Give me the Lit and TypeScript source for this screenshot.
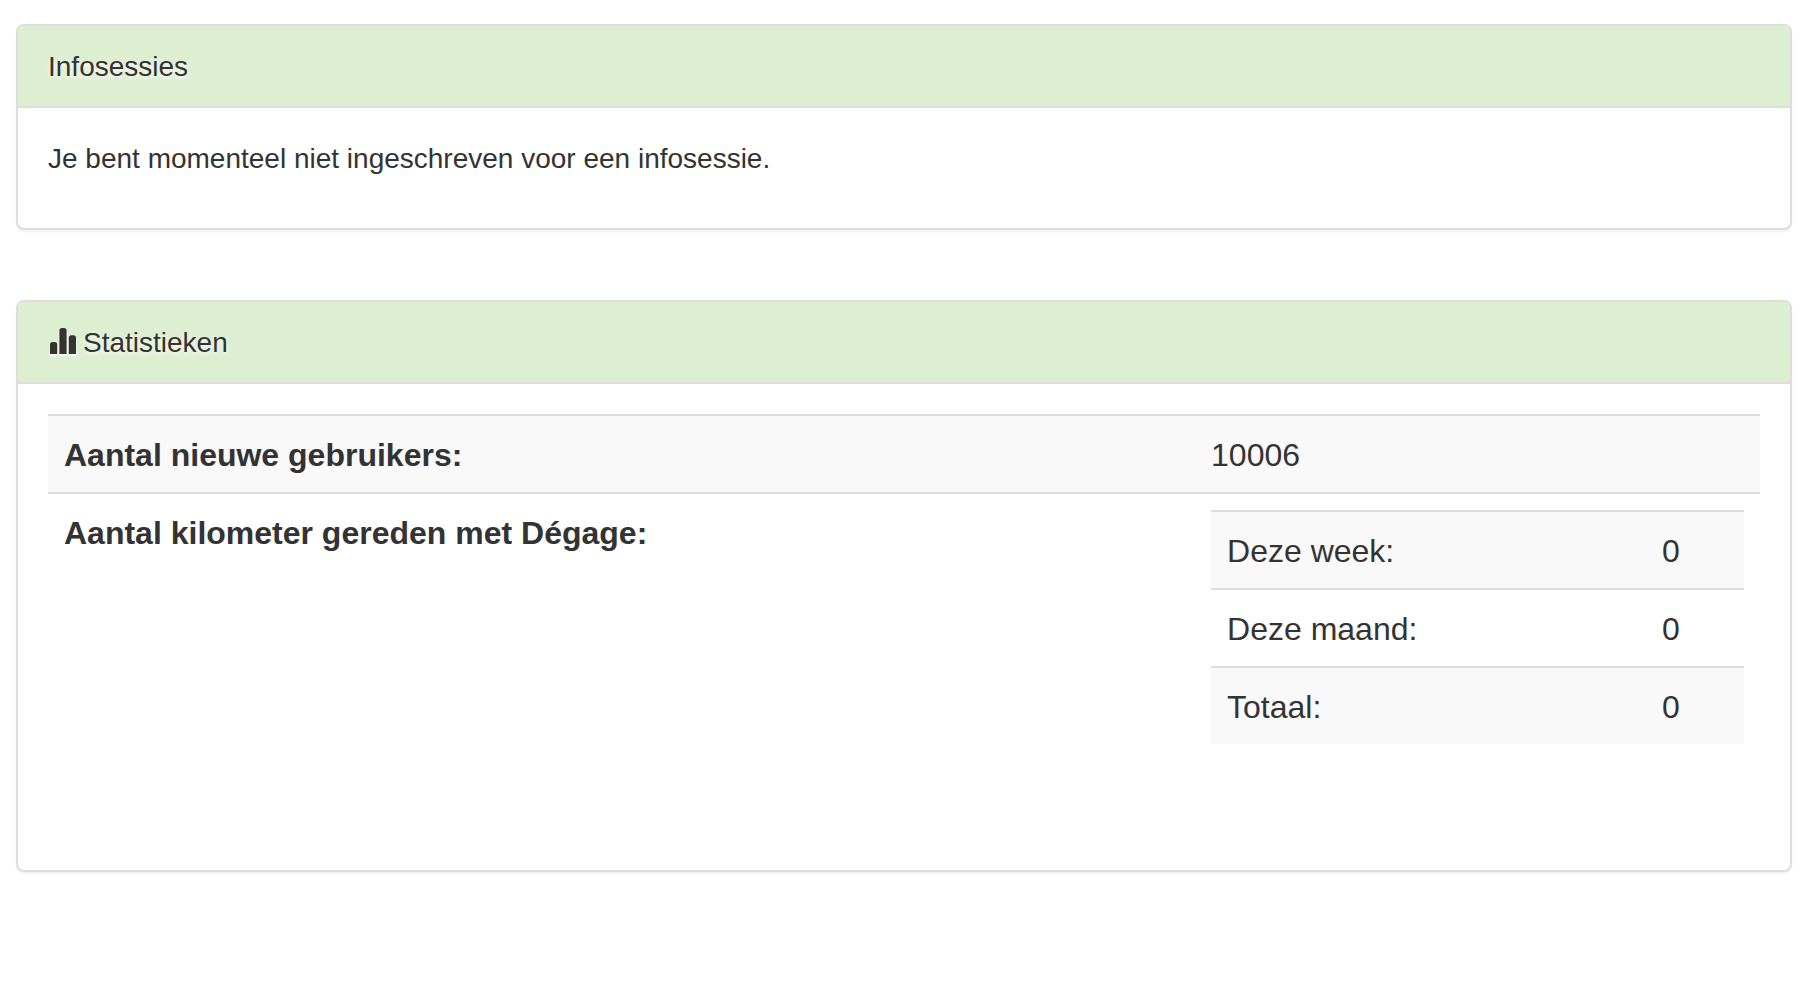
import { LitElement, html, css, nothing } from "lit";
import { customElement, property } from "lit/decorators.js";

interface DistanceRow {
  label: string;
  value: number;
}

const NEW_USERS = 10006;

const DISTANCES: DistanceRow[] = [
  { label: "Deze week:", value: 0 },
  { label: "Deze maand:", value: 0 },
  { label: "Totaal:", value: 0 },
];

@customElement("info-panel")
export class InfoPanel extends LitElement {
  @property() heading = "";
  @property({ type: Boolean }) chart = false;

  static styles = css`
    :host {
      display: block;
    }
    .panel {
      border: 2px solid #ddd;
      border-radius: 8px;
      background: #fff;
      box-shadow: 0 2px 2px rgba(0, 0, 0, 0.05);
    }
    .title {
      display: flex;
      align-items: center;
      gap: 7px;
      margin: 0;
      padding: 21px 30px 19px;
      border-bottom: 2px solid #ddd;
      border-radius: 6px 6px 0 0;
      background: #deeed1;
      font-size: 28px;
      font-weight: 400;
      line-height: 40px;
      text-shadow: 0 2px 4px #fff;
    }
    .icon {
      width: 28px;
      height: 30px;
      flex: none;
      fill: currentColor;
      filter: drop-shadow(0 2px 1px #fff);
    }
    .body {
      padding: 30px;
    }
  `;

  render() {
    return html`
      <section class="panel">
        <h2 class="title">
          ${this.chart
            ? html`<svg class="icon" viewBox="0 0 28 30" aria-hidden="true">
                <path d="M2 26V16.500q0-2.500 2.500-2.500h2.200q2.500 0 2.500 2.500v9.500z" />
                <path d="M11.400 26V2.600q0-2.500 2.500-2.500h2.200q2.500 0 2.500 2.500v23.400z" />
                <path d="M20.800 26V9.700q0-2.500 2.500-2.500h2.200q2.500 0 2.500 2.500v16.300z" />
              </svg>`
            : nothing}
          <span>${this.heading}</span>
        </h2>
        <div class="body"><slot></slot></div>
      </section>
    `;
  }
}

@customElement("app-root")
export class AppRoot extends LitElement {
  static styles = css`
    :host {
      display: block;
      color: #333;
      font-family: "Liberation Sans", Arial, sans-serif;
      font-size: 28px;
      line-height: 40px;
    }
    .page {
      display: flex;
      flex-direction: column;
      gap: 70px;
      padding: 24px 26px 24px 16px;
    }
    .message {
      margin: 0;
      padding: 1px 0 19px;
    }
    .table {
      width: 100%;
      margin-bottom: 40px;
      border-collapse: separate;
      border-spacing: 0;
      table-layout: fixed;
      font-size: 32px;
      line-height: 44px;
    }
    .table th,
    .table td {
      padding: 17px 16px 15px;
      border-top: 2px solid #ddd;
      text-align: left;
      vertical-align: top;
    }
    .table .nested {
      padding: 16px;
    }
    .striped {
      background: #f9f9f9;
    }
    .label {
      width: 67%;
      box-sizing: border-box;
    }
    .table .period {
      font-weight: 400;
    }
    .distance {
      width: 98px;
      box-sizing: border-box;
    }
  `;

  render() {
    return html`
      <main class="page">
        <info-panel heading="Infosessies">
          <p class="message">Je bent momenteel niet ingeschreven voor een infosessie.</p>
        </info-panel>
        <info-panel heading="Statistieken" chart>
          <table class="table">
            <tbody>
              <tr class="striped">
                <th class="label" scope="row">Aantal nieuwe gebruikers:</th>
                <td>${NEW_USERS}</td>
              </tr>
              <tr>
                <th class="label" scope="row">Aantal kilometer gereden met Dégage:</th>
                <td class="nested">
                  <table class="table">
                    <tbody>
                      ${DISTANCES.map(
                        (row, i) => html`<tr class=${i % 2 === 0 ? "striped" : ""}>
                          <th class="period" scope="row">${row.label}</th>
                          <td class="distance">${row.value}</td>
                        </tr>`
                      )}
                    </tbody>
                  </table>
                </td>
              </tr>
            </tbody>
          </table>
        </info-panel>
      </main>
    `;
  }
}
